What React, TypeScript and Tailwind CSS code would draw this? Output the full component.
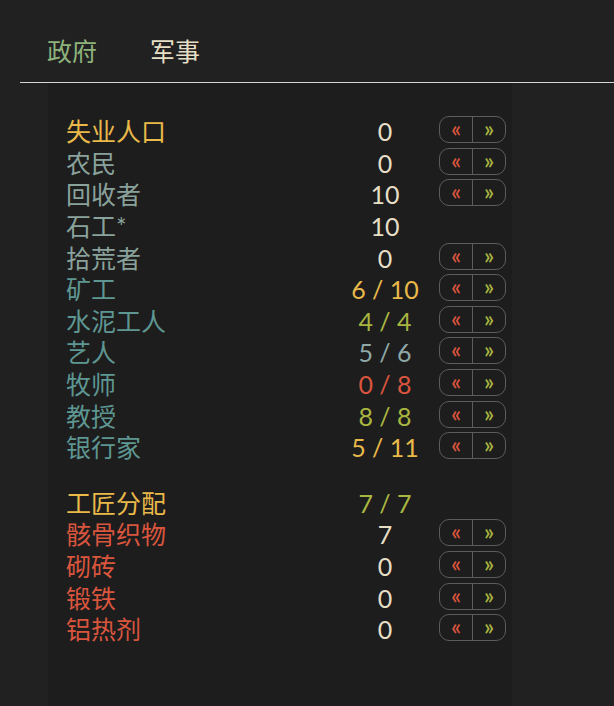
import React from 'react';

type Row = {
  name: string;
  nameColor: string;
  value: string;
  valueColor: string;
  buttons: boolean;
};

const cream = 'text-[#e6dfc6]';
const yellow = 'text-[#e9b949]';
const grayTeal = 'text-[#8aa29c]';
const teal = 'text-[#5e9692]';
const red = 'text-[#d9553e]';
const olive = 'text-[#a9b640]';
const slate = 'text-[#8fa8a8]';

const workers: Row[] = [
  { name: '失业人口', nameColor: yellow, value: '0', valueColor: cream, buttons: true },
  { name: '农民', nameColor: grayTeal, value: '0', valueColor: cream, buttons: true },
  { name: '回收者', nameColor: grayTeal, value: '10', valueColor: cream, buttons: true },
  { name: '石工*', nameColor: grayTeal, value: '10', valueColor: cream, buttons: false },
  { name: '拾荒者', nameColor: grayTeal, value: '0', valueColor: cream, buttons: true },
  { name: '矿工', nameColor: teal, value: '6 / 10', valueColor: yellow, buttons: true },
  { name: '水泥工人', nameColor: teal, value: '4 / 4', valueColor: olive, buttons: true },
  { name: '艺人', nameColor: teal, value: '5 / 6', valueColor: slate, buttons: true },
  { name: '牧师', nameColor: teal, value: '0 / 8', valueColor: red, buttons: true },
  { name: '教授', nameColor: teal, value: '8 / 8', valueColor: olive, buttons: true },
  { name: '银行家', nameColor: teal, value: '5 / 11', valueColor: yellow, buttons: true },
];

const crafts: Row[] = [
  { name: '工匠分配', nameColor: yellow, value: '7 / 7', valueColor: olive, buttons: false },
  { name: '骸骨织物', nameColor: red, value: '7', valueColor: cream, buttons: true },
  { name: '砌砖', nameColor: red, value: '0', valueColor: cream, buttons: true },
  { name: '锻铁', nameColor: red, value: '0', valueColor: cream, buttons: true },
  { name: '铝热剂', nameColor: red, value: '0', valueColor: cream, buttons: true },
];

const Stepper = () => (
  <div className="flex h-[27px] w-[67px] rounded-[10px] border border-[#5c5c5c]">
    <button className="flex flex-1 items-center justify-center border-r border-[#5c5c5c] pb-[2px] text-[23px] font-semibold leading-none text-[#d9553e]">
      «
    </button>
    <button className="flex flex-1 items-center justify-center pb-[2px] text-[23px] font-semibold leading-none text-[#a9b640]">
      »
    </button>
  </div>
);

const RowLine = ({ row }: { row: Row }) => (
  <div className="flex h-[31.6px] items-center">
    <div className={`w-[276px] pt-[4px] text-[25px] leading-none ${row.nameColor}`}>{row.name}</div>
    <div className={`w-[86px] pt-[4px] text-center text-[25px] leading-none ${row.valueColor}`}>{row.value}</div>
    <div className="ml-[11px] w-[67px]">{row.buttons && <Stepper />}</div>
  </div>
);

export default function App() {
  return (
    <div
      className="flex min-h-[706px] flex-col bg-[#212121]"
      style={{ fontFamily: 'Lato, "Noto Sans CJK SC", sans-serif' }}
    >
      {/* Tabs */}
      <div className="ml-[20px] flex h-[83px] items-end gap-[53px] border-b border-[#d6d6d6] pb-[18px] pl-[27px] text-[25px] leading-none">
        <span className="text-[#8db27c]">政府</span>
        <span className="text-[#e6dfc6]">军事</span>
      </div>

      {/* Jobs panel */}
      <div className="ml-[48px] w-[464px] flex-1 bg-[#1d1d1d] pl-[18px] pt-[31px]">
        {workers.map((r) => (
          <RowLine key={r.name} row={r} />
        ))}
        <div className="mt-[24px]">
          {crafts.map((r) => (
            <RowLine key={r.name} row={r} />
          ))}
        </div>
      </div>
    </div>
  );
}
